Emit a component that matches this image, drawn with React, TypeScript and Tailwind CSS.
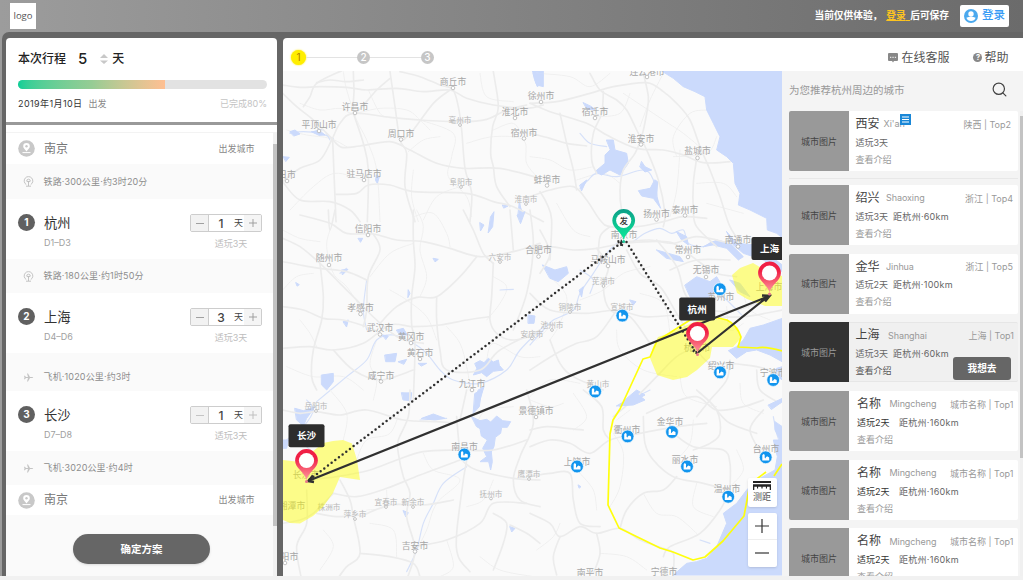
import React from "react";
import { Search } from "lucide-react";

type Tile = { x: number; y: number; roads: string[]; minor: string[]; rivers: string[]; water: string[] };

/* Geometry is kept per map tile, three units to a pixel. */
const tiles: Tile[] = [
  {
    x: 280, y: 30,
    roads: [
      "8,165 60,172 120,170 200,172 260,180 350,175 430,185 510,180 560,205 640,225 740,235 790,225",
      "185,122 110,160 90,200 70,230",
      "8,190 50,230 100,270 155,325",
      "8,455 60,415 120,390 155,330 180,280 220,250 330,262 420,270 540,275 620,268 680,240 740,225",
      "155,325 185,352 240,348 330,335 390,360 470,400 550,415 660,415 780,445",
      "220,250 250,340 265,420 262,575",
      "158,330 162,430 168,575",
      "168,493 230,490 265,465 330,465 400,485 560,490 640,515 700,530 790,575",
      "8,455 60,510 150,515 210,540 240,575",
      "330,125 345,230 360,330 380,370 375,470 405,575",
      "510,180 460,220 400,300 370,330",
      "360,125 420,140 480,165 518,178 535,230 545,300 555,415 575,490 570,575",
      "640,125 655,230 638,290 632,370 640,410 650,470 690,530",
      "220,125 222,180 225,248 290,180 330,145",
      "110,158 150,150 200,155 250,150",
    ],
    minor: [
      "190,125 200,180 230,270 260,330 290,420 300,575",
      "20,300 80,315 150,325 200,350",
      "420,270 520,310 515,380 505,440 560,500 575,560",
      "60,220 120,240 180,235 220,250 300,235 380,240 420,270 450,300",
      "400,420 395,500 415,575", "560,340 640,320 730,330 740,400 780,450",
      "640,300 700,280 730,325", "265,180 300,250 330,262", "385,365 430,330 480,320",
      "30,540 100,470 165,430 250,450", "600,130 620,200 700,215", "430,570 470,500 540,470",
    ],
    rivers: ["30,310 70,305 120,310 160,325", "720,520 722,575", "100,305 130,300 150,330"],
    water: ["757,122 770,165 790,170 790,122", "30,305 45,300 60,312 42,318", "95,305 120,303 135,315 118,316", "10,380 28,382 18,394", "290,435 298,440 292,460 287,452", "668,525 684,528 672,534", "718,520 726,545 724,568 714,560"],
  },
  {
    x: 530, y: 70,
    roads: [
      "0,100 80,95 180,70 250,50 350,38 400,65 440,100 480,150 510,230 540,300 570,380 600,470 640,530",
      "0,100 60,125 170,160 230,195 320,235 400,240 460,255 520,278 600,275",
      "180,10 210,60 260,90 290,120 320,180 350,240 385,330 405,430 400,470",
      "220,65 215,130 190,190 185,270 200,310",
      "340,10 355,80 350,130 335,200 315,250 280,300 270,360 275,420 290,460",
      "0,380 60,360 130,350 170,390 210,450 240,470 320,470 400,455 460,440 530,445",
      "0,190 60,205 110,220 170,228",
      "500,265 490,340 490,420 500,470 560,530",
      "90,130 110,220 130,300 140,360", "30,365 50,400 65,450 60,570",
      "240,470 210,500 205,570", "290,515 360,510 430,520 500,500 600,520",
    ],
    minor: [
      "280,70 400,150 460,190 520,240", "400,10 360,90 330,170", "540,120 480,130 430,200 440,260",
      "20,10 120,20 180,50 240,10", "430,260 530,250 560,200", "450,240 440,360 420,440",
      "500,340 580,340 620,380", "530,400 640,430", "0,260 60,270 120,300 190,290",
      "140,330 220,310 270,340", "80,400 130,480 180,500", "300,70 270,130 200,140",
    ],
    rivers: ["150,355 175,330 200,310 260,320 340,300 370,330 385,400", "310,515 345,490 390,475 425,490 460,480 475,520 520,530 550,515 600,520", "150,190 180,220 230,230"],
    water: [
      "390,0 430,25 460,50 495,65 525,80 530,120 550,160 570,200 560,240 590,260 610,280 615,340 630,370 625,405 660,420 710,445 712,480 740,490 765,510 765,0",
      "230,210 250,210 255,240 290,250 295,280 270,315 240,300 215,315 195,305 225,280 225,255 240,240",
      "375,330 383,335 380,380 392,415 370,385 335,378 325,362 360,355",
      "335,275 345,290 365,300 345,306 330,292", "10,10 40,10 35,40 22,50 14,30", "160,98 185,110 195,120 172,118",
      "440,485 470,500 475,525 455,510", "520,530 560,510 600,520 640,560 625,570 590,535 550,525", "150,345 170,330 155,362",
    ],
  },
  {
    x: 280, y: 210,
    roads: [
      "8,85 60,110 120,160 170,210 220,260 290,330 360,385 430,400",
      "8,155 60,165 120,175 200,185 260,210",
      "60,15 150,40 200,70 280,72 350,90 430,95 510,115 600,140 700,125 780,100",
      "8,290 70,300 130,325 190,330 260,350",
      "8,415 90,410 160,420 250,400 330,345 400,350 480,345 560,330 630,320",
      "120,160 130,260 125,330 100,420 95,500 110,540",
      "400,0 400,90 405,170 395,260 395,345 405,400 400,570",
      "590,140 540,200 470,260 410,262 350,290 300,340",
      "470,260 470,330 480,420 500,480 600,480 660,420 780,360",
      "280,72 300,120 265,200 260,300 250,350",
      "145,0 150,60 165,0", "640,160 635,260 630,330 650,370 700,390 780,370",
      "550,0 580,60 610,130 640,160", "690,0 700,120", "160,420 220,480 300,510 400,480", "750,0 760,110 740,250 700,360",
    ],
    minor: [
      "410,0 430,50 420,120 440,200 420,260", "150,60 140,110 160,190 200,230 240,290",
      "400,20 460,10 500,70 510,110", "330,240 380,270 440,320 470,390", "640,200 680,230 660,280 620,330",
      "8,240 50,200 100,190", "60,330 90,370 110,410", "290,390 270,460 290,510 280,570", "500,350 540,400 560,470 570,530",
      "20,470 100,500 190,500 250,540", "270,200 330,130 400,100", "620,450 640,400 720,440 780,440", "8,60 60,85 120,95",
    ],
    rivers: [
      "110,575 200,500 260,450 290,390 340,375 400,400 440,430 480,480 520,510 600,520 680,480 720,420 790,350",
      "180,190 200,175", "660,240 700,238", "260,210 250,300 260,360",
    ],
    water: [
      "125,495 160,490 160,515 140,540 125,525", "315,435 350,430 345,455 318,455", "585,460 600,452 612,458 625,445 640,456 655,450 658,466 670,480 640,484 620,500 605,488 580,495 590,476",
      "600,38 612,45 602,62", "632,20 642,5 638,50 625,68", "712,15 735,5 722,40", "745,315 765,318 762,340 745,340",
      "415,460 440,460 425,468", "595,540 612,530 600,570 588,570", "185,180 204,178 188,194", "460,145 475,148 466,155",
      "385,240 390,250 384,262", "190,335 205,330 200,350", "308,375 325,378 318,388", "375,550 395,548 390,565", "235,85 248,85 242,96",
      "350,360 370,355 382,375 360,375", "355,455 380,448 372,462", "48,218 58,224 52,228",
    ],
  },
  {
    x: 530, y: 230,
    roads: [
      "0,60 60,50 130,60 200,55 280,40 360,35 430,40 500,90 560,130 620,140",
      "290,60 330,130 390,170 440,250 500,350",
      "200,55 235,110 220,170 240,240 300,260 360,340",
      "0,190 60,240 170,250 260,240 340,260 440,255",
      "380,30 440,110 470,200 540,240 620,240 700,210",
      "0,420 80,370 140,340 200,320 260,240",
      "60,330 90,400 130,440 220,480", "500,350 440,380 380,440 320,500 250,560",
      "500,360 540,400 600,400 680,410 750,430", "600,390 590,450 540,510 500,560",
      "520,260 640,260 757,240", "420,120 500,90 600,90", "30,0 60,70 30,130", "680,420 690,480 750,520",
    ],
    minor: [
      "150,210 220,180 280,130 360,110", "60,140 110,200 90,280 60,330", "330,190 400,220 420,310",
      "0,500 60,450 150,460", "260,300 270,360 340,420 440,440", "450,440 470,500 560,530", "590,230 600,300 640,280",
      "20,330 60,290 80,270", "630,460 640,520 700,550", "420,270 480,320", "640,190 660,240 720,270",
    ],
    rivers: ["0,345 40,300 70,270 130,240 150,190 190,130 230,70 260,40", "540,170 590,210 640,260", "150,120 190,150 180,190", "360,480 320,500 270,525"],
    water: [
      "757,265 700,285 660,295 640,330 620,350 595,362 620,385 650,365 680,360 720,375 765,400 765,262",
      "465,165 500,140 540,155 560,140 575,165 545,195 500,225 480,200", "38,105 75,120 110,110 115,130 85,155 60,145",
      "590,5 620,40 680,45 757,105 757,125 700,90 640,70 610,45", "380,60 450,80 460,95 410,85", "148,180 160,170 155,200",
      "300,210 318,215 310,225", "290,505 320,480 345,495 310,515 270,530", "740,415 757,410 757,450 742,440", "600,150 630,160 660,200 630,185",
    ],
  },
  {
    x: 280, y: 390,
    roads: [
      "8,60 60,70 110,65 180,75 260,60 370,90 470,95 530,100",
      "390,0 385,80 355,150 355,190 370,260 390,310 380,380 405,480 380,570",
      "80,270 170,260 270,240 350,210 430,185 530,180 640,180 740,150",
      "160,310 230,320 320,295 420,255 540,210",
      "530,80 540,180 560,200 550,270 530,430 535,500 570,545",
      "550,215 590,240 700,265 780,270",
      "80,300 80,400 50,470 65,570", "180,270 210,330 220,380 240,490 200,530 170,570",
      "240,490 330,500 400,520 420,560", "240,380 330,345 430,345 520,330",
      "400,470 500,450 600,400 640,340 740,340", "640,370 680,400 670,460 640,540", "740,0 760,100 720,200 700,270 720,330 780,350",
      "110,370 170,380 240,375", "690,405 740,430 780,460", "8,400 60,390 100,370 160,310", "560,0 540,90",
    ],
    minor: [
      "150,0 200,70 190,150", "230,210 260,150 330,130 360,60", "430,190 460,240 540,270 470,340 440,420 410,480",
      "270,400 340,420 350,500", "590,100 620,60 700,50", "640,270 610,330 560,350", "130,420 160,470 120,540",
      "500,450 520,530 480,560", "600,500 660,540 760,560", "320,300 315,350 260,360",
    ],
    rivers: ["560,230 490,280 460,340 430,400 410,480 380,545", "80,30 100,60 70,110 20,150", "420,90 500,85", "60,150 90,180"],
    water: [
      "575,80 600,92 620,88 632,96 650,78 668,92 692,95 682,112 665,112 662,130 646,142 642,170 634,186 637,215 632,240 626,215 600,215 620,200 608,175 622,150 604,138 600,116 590,110", "585,10 605,0 598,50 580,70",
      "45,55 70,62 105,50 80,85 70,108 50,90", "425,85 460,72 495,85 465,90", "8,150 25,150 20,175 8,175", "690,410 705,415 696,425",
      "370,362 385,368 378,380", "365,8 395,10 392,32 370,30",
    ],
  },
  {
    x: 530, y: 390,
    roads: [
      "0,170 60,150 120,160 180,190 240,150 330,130 440,110 530,100",
      "160,0 215,50 220,120 240,150", "0,260 60,250 120,250 130,330 150,400 210,410",
      "340,80 345,160 370,210 430,260 520,280 600,300", "430,130 490,170 580,180 600,220 600,290",
      "600,300 570,360 510,430 420,470 400,500", "270,415 290,360 340,310 400,300 440,260",
      "0,370 60,400 90,440 150,410 200,430 270,415 330,450 400,475 430,490 430,550",
      "200,430 210,490 190,550", "90,440 70,500 80,555", "500,0 560,60 570,130 540,160 490,180",
      "350,70 420,40 500,20 560,60 640,50 700,30", "700,60 660,120 700,200", "560,60 600,100 680,130", "0,120 50,110 110,115 160,120",
    ],
    minor: [
      "250,130 280,190 270,290 240,350", "340,310 380,370 440,380 500,430", "20,480 70,440 90,400", "130,10 170,80 130,120",
      "440,210 480,160 490,90", "150,250 190,300 200,360", "500,280 490,350 550,380", "210,490 290,500 350,540",
      "300,60 260,90", "620,180 640,240 600,290", "0,30 60,50 100,40",
    ],
    rivers: ["730,80 740,130 750,160", "510,450 540,460"],
    water: [
      "735,95 757,110 765,555 430,555 470,520 500,515 530,505 560,470 590,400 580,370 620,340 650,300 680,270 735,240 742,200 730,150 750,150 735,120",
      "290,30 320,10 345,30 310,45 260,48", "715,45 757,25 757,35 725,58", "145,285 153,290 148,294",
    ],
  },
];

/** Catmull-Rom curve through a list of "x,y" points. */
function curve(points: string): string {
  const p = points.split(" ").map((s) => s.split(",").map(Number));
  let d = `M${p[0][0]} ${p[0][1]}`;
  for (let i = 0; i < p.length - 1; i++) {
    const a = p[i - 1] ?? p[i], b = p[i], c = p[i + 1], e = p[i + 2] ?? c;
    d += `C${b[0] + (c[0] - a[0]) / 6} ${b[1] + (c[1] - a[1]) / 6} ${c[0] - (e[0] - b[0]) / 6} ${c[1] - (e[1] - b[1]) / 6} ${c[0]} ${c[1]}`;
  }
  return d;
}

/* name, text centre x, text centre y, dot offset (0 = none), faint */
const places: [string, number, number, number, boolean][] = [
  ["商丘市", 453, 82, 6, false], ["许昌市", 355, 107, 6, false], ["平顶山市", 319, 125, 6, false], ["亳州市", 460, 120, 5, true],
  ["周口市", 401, 133.5, 6, false], ["徐州市", 541, 96, 6, false], ["淮北市", 515, 112, 6, false], ["宿州市", 524, 132.5, 6, false],
  ["驻马店市", 364, 174, 6, false], ["阜阳市", 461, 182, 5, true], ["淮南市", 526, 199, 5, true], ["日市", 287, 175, 6, false],
  ["连云港市", 647, 72, 5, false], ["宿迁市", 595, 112, 6, false], ["淮安市", 641, 138.5, 6, false], ["盐城市", 697.5, 151, 7, false],
  ["蚌埠市", 547, 179.5, 6, false], ["扬州市", 656.5, 213.5, 6, false], ["泰州市", 685, 209.5, 6, false], ["南京市", 624, 234.5, 0, false],
  ["南通市", 738, 239.5, 7, false], ["常州市", 688, 250, 7, false], ["合肥市", 538.5, 249.5, 7, false], ["六安市", 500, 257, 5, true],
  ["信阳市", 368, 229, 6, false], ["随州市", 329, 258, 7, false], ["孝感市", 360.5, 308, 6, false], ["武汉市", 380, 327.5, 7, false],
  ["黄冈市", 411, 337, 6, false], ["黄石市", 420, 353, 6, false], ["咸宁市", 381, 375.5, 6, false], ["安庆市", 532, 333.5, 5, true],
  ["九江市", 472, 384, 6, false], ["马鞍山市", 608, 260, 6, false], ["芜湖市", 603.5, 281, 5, true], ["铜陵市", 570, 307, 5, true],
  ["宣城市", 622, 307, 0, true], ["池州市", 552, 325, 5, true], ["无锡市", 706, 270, 7, false], ["苏州市", 721, 297, 0, false],
  ["上海市", 769, 287, 0, false], ["杭州市", 697, 348, 0, false], ["绍兴市", 721, 366, 0, false], ["宁波市", 773, 373, 0, false],
  ["黄山市", 598, 384, 0, true], ["景德镇市", 536, 411, 6, false], ["岳阳市", 316, 406, 5, true], ["南昌市", 464.5, 447, 0, false],
  ["鹰潭市", 529, 474, 5, true], ["抚州市", 491, 493.5, 5, true], ["长沙市", 306, 475, 0, false], ["湘潭市", 292, 506, 0, false],
  ["株洲市", 329, 506.5, 0, true], ["萍乡市", 355, 514, 5, true], ["宜春市", 386, 502, 5, true], ["新余市", 413, 502, 5, true],
  ["吉安市", 415, 545.5, 6, false], ["衡阳市", 285, 557, 6, false], ["上饶市", 577, 462, 0, false], ["衢州市", 627, 429.5, 0, false],
  ["金华市", 670, 422, 0, false], ["丽水市", 685, 460, 0, false], ["台州市", 766, 448.5, 0, false], ["温州市", 727, 489, 0, false],
  ["南平市", 590, 572.5, 0, false], ["宁德市", 664, 572, 0, false],
];

const attractions: [number, number][] = [
  [622.3, 315.6], [719.8, 289.2], [720, 372.4], [773.2, 380], [595.2, 391.5], [627.6, 436.4], [672, 432],
  [577, 466.5], [687, 466.5], [765.7, 457.3], [728.2, 496.8], [464.3, 454.5],
];

function Pin({ x, y, tone, children }: { x: number; y: number; tone: "red" | "green"; children?: React.ReactNode }) {
  return (
    <g transform={`translate(${x} ${y})`}>
      <path d="M0 19.5C-2 11-11.4 8-11.4 0a11.4 11.4 0 1 1 22.8 0C11.4 8 2 11 0 19.5Z" fill={tone === "red" ? "url(#pinRed)" : "url(#pinGreen)"} />
      <circle r="7.6" fill="#fff" />
      <circle cy="21" r="1.5" fill={tone === "red" ? "#e7798b" : "#1fc79b"} />
      {children}
    </g>
  );
}

function Tag({ x, y, text }: { x: number; y: number; text: string }) {
  return (
    <g>
      <rect x={x - 18} y={y - 11.5} width="36" height="23" rx="2" fill="#2d2d2d" />
      <text x={x} y={y + 3.7} textAnchor="middle" fontSize="9.6" fontWeight="700" fill="#fff">{text}</text>
    </g>
  );
}

function TripMap() {
  return (
    <div className="relative h-[505px] w-[499px] shrink-0 overflow-hidden bg-[#fafafa]">
      <svg viewBox="283 71 499 505" className="block h-full w-full">
        <defs>
          <linearGradient id="pinRed" x1="0" y1="0" x2="0" y2="1">
            <stop offset="0.3" stopColor="#f01f45" /><stop offset="1" stopColor="#ff9aa0" />
          </linearGradient>
          <linearGradient id="pinGreen" x1="0" y1="0" x2="0" y2="1">
            <stop offset="0" stopColor="#0d9f88" /><stop offset="1" stopColor="#0ceb9a" />
          </linearGradient>
        </defs>
        {tiles.map((t, i) => (
          <g key={i} transform={`translate(${t.x} ${t.y}) scale(.33333)`} fill="none" strokeLinecap="round">
            {t.minor.map((r) => <path key={r} d={curve(r)} stroke="#f0f0f0" strokeWidth="3" />)}
            {t.rivers.map((r) => <path key={r} d={curve(r)} stroke="#d6e1f9" strokeWidth="3.5" />)}
            {t.water.map((w) => <polygon key={w} points={w} fill="#cbdafc" stroke="#cbdafc" strokeWidth="3" strokeLinejoin="round" />)}
            {t.roads.map((r) => <path key={r} d={curve(r)} stroke="#ececec" strokeWidth="5" />)}
          </g>
        ))}
        <g textAnchor="middle">
          {places.map(([name, x, y, dot, faint]) => (
            <g key={name}>
              <text x={x} y={y + 3.3} fontSize={faint ? 7.6 : 8.8} fill={faint ? "#b8b8b8" : "#a6a6a6"}>{name}</text>
              {dot > 0 && <circle cx={x} cy={y + dot} r={faint ? 1.4 : 1.8} fill="#fff" stroke="#b5b5b5" strokeWidth=".8" />}
            </g>
          ))}
        </g>
        <g fill="#ffff00" fillOpacity=".45">
          <polygon points="283,460 300,462 317,448 323,443 333,441 343,440 352,443.5 357,460 360,480 340,477 333,493 323,507 313,516 300,523.5 290,523 283,520" />
          <polygon points="650,358 653,347 658,337 670,333 687,325 700,320 710,318 727,320 738,328 741,338 733,347 712,347 710,358 697,370 687,377 673,380 657,375" />
          <polygon points="732,275 740,268 753,263 765,270 782,276 782,306 765,306 747,299 737,293" />
        </g>
        <path d="M782 351Q765 346 757 348L738 347L741 337Q737 325 727 320Q707 314 690 320L657 341L650 357L643 359L620 409L613 420L610 434L608 505L619 528L660 548L673 552L693 560L705 557L723 541L744 516L750 484L766 472M774 476L782 464" fill="none" stroke="#ffff00" strokeOpacity=".95" strokeWidth="1.7" strokeLinejoin="round" />
        <g stroke="#303030" fill="none" strokeWidth="2.2">
          <path d="M308 481L768 296.5L698 352.5" />
          <path d="M762 295.5L769.5 296L765 301.5M313 475.5L308.5 481L314 482" strokeWidth="2.6" />
          <g strokeWidth="2.5" strokeLinecap="round" strokeDasharray="0 4.6">
            <path d="M621 243L309 480" />
            <path d="M626.5 242L695 351" />
          </g>
          <path d="M617.5 242L622 241M621.5 246L622 241M693 350L696.5 352.5L698 349" strokeWidth="3" strokeDasharray="2 1.5" />
        </g>
        {attractions.map(([x, y]) => (
          <g key={`${x}-${y}`} transform={`translate(${x} ${y})`}>
            <circle r="6.4" fill="#1295ee" stroke="#fff" strokeWidth=".7" />
            <path d="M-3.4 3.1V-2.1L-2.3-3.4L-1-2.6V.5L0 1.2V.3L1.4-1L3.5.1V3.1Z" fill="#fff" />
          </g>
        ))}
        <Pin x={306.5} y={460.5} tone="red" />
        <Pin x={697.5} y={333.5} tone="red" />
        <Pin x={769.5} y={273} tone="red" />
        <Pin x={623.7} y={220.5} tone="green">
          <text y="3.2" textAnchor="middle" fontSize="8.5" fontWeight="500" fill="#333">发</text>
        </Pin>
        <Tag x={306.5} y={435.7} text="长沙" />
        <Tag x={697.2} y={309} text="杭州" />
        <Tag x={769.5} y={248.5} text="上海" />
      </svg>
      <div className="absolute right-[5.5px] bottom-[9.5px] flex w-[29px] flex-col gap-[6px]">
        <button className="flex h-[29px] flex-col items-center justify-center rounded-[2px] bg-white shadow">
          <svg width="18" height="9" viewBox="0 0 18 9" className="mb-px shrink-0">
            <path d="M0 0H18V2H0ZM0 3.2H18V9H16.7V5.8H14V7.5H12.9V5.8H9.6V7.5H8.4V5.8H5.1V7.5H4V5.8H1.3V9H0Z" fill="#222" />
          </svg>
          <span className="text-[9px] leading-[12px] text-[#555]">测距</span>
        </button>
        <div className="flex h-[54px] flex-col rounded-[2px] bg-white shadow">
          {["M7 0V14M0 7H14", "M0 7H14"].map((d, i) => (
            <button key={d} className={i === 0 ? "flex flex-1 items-center justify-center border-b border-[#eee]" : "flex flex-1 items-center justify-center"}>
              <svg width="14" height="14" viewBox="0 0 14 14"><path d={d} stroke="#333" strokeWidth="1.2" /></svg>
            </button>
          ))}
        </div>
      </div>
    </div>
  );
}

function HomeRow() {
  return (
    <div className="flex items-center bg-white pr-[18.5px] pl-3">
      <svg width="17" height="17" viewBox="0 0 17 17">
        <circle cx="8.5" cy="8.5" r="8.3" fill="#c8c8c8" />
        <path d="M8.5 11.500C6.5 9 5.2 8 5.2 6.3a3.3 3.3 0 1 1 6.6 0C11.8 8 10.5 9 8.5 11.5Z" fill="#fff" />
        <circle cx="8.5" cy="6.3" r="1.2" fill="#c8c8c8" />
        <path d="M4.5 12.6H12.5" stroke="#fff" />
      </svg>
      <span className="ml-[9px] text-[12px] text-[#777]">南京</span>
      <span className="ml-auto text-[9px] text-[#888]">出发城市</span>
    </div>
  );
}

function LegRow({ icon, text, low }: { icon: "train" | "plane"; text: string; low?: boolean }) {
  return (
    <div className={low ? "flex items-center bg-[#fafafa] pt-[10px] pl-[17px]" : "flex items-center bg-[#fafafa] pl-[17px]"}>
      {icon === "train" ? (
        <svg width="11" height="11" viewBox="0 0 11 11" fill="none" stroke="#bdbdbd" strokeWidth=".9">
          <path d="M3.3 8.6A4.3 4.3 0 1 1 7.7 8.6M3 10.2H8M5.5 10V5M3.7 5.2Q3.7 3.2 5.5 3.2T7.3 5.2L5.5 6Z" />
        </svg>
      ) : (
        <svg width="11" height="11" viewBox="0 0 11 11" fill="#c4c4c4">
          <path d="M1 3.7H1.8L3 5H5L4 1.5H5L7 5H9.3Q10.2 5.1 10.2 5.5T9.3 6H7L5 9.5H4L5 6H3L1.8 7.3H1L1.5 5.5Z" />
        </svg>
      )}
      <span className="ml-[9.5px] text-[9px] tracking-[0.017em] text-[#8d8d8d]">{text}</span>
    </div>
  );
}

function StopRow({ n, city, span, days, dim }: { n: number; city: string; span: string; days: number; dim?: boolean }) {
  return (
    <div className="flex items-start bg-white pt-[13px] pr-[11px] pl-3">
      <span className="mt-[2px] flex h-[17px] w-[17px] items-center justify-center rounded-full bg-[#606060] text-[10px] font-bold text-white">{n}</span>
      <div className="ml-[9px] flex flex-col">
        <span className="text-[13.3px] leading-[22px] text-[#333]">{city}</span>
        <span className="mt-[2px] text-[9px] leading-[13px] text-[#a0a0a0]">{span}</span>
      </div>
      <div className="mt-[2px] ml-auto flex w-[72px] flex-col">
        <div className="flex h-[18px] overflow-hidden rounded-[2px] border border-[#cdcdcd] text-[#444]">
          <span className="flex w-[18px] items-center justify-center border-r border-[#cdcdcd] bg-[#f2f2f2]">
            <i className={dim ? "h-px w-2 bg-[#c4c4c4]" : "h-px w-2 bg-[#a0a0a0]"} />
          </span>
          <span className="flex w-[24px] items-center justify-center pt-px text-[12px] font-medium">{days}</span>
          <span className="flex flex-1 items-center justify-center text-[9px]">天</span>
          <span className="flex w-[17px] items-center justify-center bg-[#f5f5f5]">
            <svg width="8" height="8" viewBox="0 0 8 8"><path d="M4 0V8M0 4H8" stroke={dim ? "#bbb" : "#999"} strokeWidth=".9" /></svg>
          </span>
        </div>
        <span className="mt-[5px] pl-[10px] text-center text-[9px] leading-[13px] text-[#bdbdbd]">适玩3天</span>
      </div>
    </div>
  );
}

function Itinerary() {
  return (
    <aside className="flex h-[538px] w-[271px] shrink-0 flex-col overflow-hidden rounded-t-[4px] bg-white">
      <div className="h-[84px] px-3 pt-3 pr-[10px]">
        <div className="flex h-[18px] items-center text-[12px] font-medium text-[#222]">
          本次行程
          <span className="ml-3 text-[15px]">5</span>
          <svg width="8" height="10" viewBox="0 0 8 10" className="ml-[13px] mr-1"><path d="M4 0L8 4H0ZM4 10L8 6.5H0Z" fill="#c8c8c8" /></svg>
          天
        </div>
        <div className="mt-[12px] h-[9px] overflow-hidden rounded-full bg-[#e2e2e2]">
          <div className="h-full w-[147px] bg-linear-to-r from-[#06cf97] via-[#95cc94] to-[#ffbf92]" />
        </div>
        <div className="mt-[8px] flex h-[14px] items-center text-[9px]">
          <span className="tracking-[0.045em] text-[#333]">2019年1月10日</span>
          <span className="ml-[6px] text-[#888]">出发</span>
          <span className="ml-auto text-[#c4c4c4]">已完成80%</span>
        </div>
      </div>
      <div className="h-[3px] bg-[#999]" />
      <div className="flex flex-1 pt-[7px]">
        <div className="flex flex-1 flex-col bg-[#fafafa]">
          <div className="grid grid-rows-[31px_35px_60px_34px_60px_38px_60px_34px_30px] border-t border-[#f3f3f3]">
            <HomeRow />
            <LegRow icon="train" text="铁路·300公里·约3时20分" />
            <StopRow n={1} city="杭州" span="D1–D3" days={1} />
            <LegRow icon="train" text="铁路·180公里·约1时50分" />
            <StopRow n={2} city="上海" span="D4–D6" days={3} />
            <LegRow icon="plane" text="飞机·1020公里·约3时" low />
            <StopRow n={3} city="长沙" span="D7–D8" days={1} dim />
            <LegRow icon="plane" text="飞机·3020公里·约4时" />
            <HomeRow />
          </div>
          <button className="mt-[19px] ml-[67px] h-[30px] w-[137px] rounded-full bg-[#666] pt-px text-[10.5px] font-bold text-white shadow-sm">确定方案</button>
        </div>
        <div className="w-[4px] bg-[#f1f1f1] pt-3"><div className="h-[382px] bg-[#c3c3c3]" /></div>
      </div>
    </aside>
  );
}

type City = { name: string; pinyin: string; place: string; days: number; far?: string; kind?: "note" | "active" | "plain" };

const cities: City[] = [
  { name: "西安", pinyin: "Xi'an", place: "陕西 | Top2", days: 3, kind: "note" },
  { name: "绍兴", pinyin: "Shaoxing", place: "浙江 | Top4", days: 3, far: "距杭州·60km" },
  { name: "金华", pinyin: "Jinhua", place: "浙江 | Top5", days: 2, far: "距杭州·100km" },
  { name: "上海", pinyin: "Shanghai", place: "上海 | Top1", days: 3, far: "距杭州·60km", kind: "active" },
  { name: "名称", pinyin: "Mingcheng", place: "城市名称 | Top1", days: 2, far: "距杭州·160km", kind: "plain" },
  { name: "名称", pinyin: "Mingcheng", place: "城市名称 | Top1", days: 2, far: "距杭州·160km", kind: "plain" },
  { name: "名称", pinyin: "Mingcheng", place: "城市名称 | Top1", days: 2, far: "距杭州·160km", kind: "plain" },
];

function CityCard({ c }: { c: City }) {
  const active = c.kind === "active";
  const plain = c.kind === "plain";
  return (
    <div className={active ? "relative flex h-[60px] shrink-0 rounded-[2px] border-y border-[#e6e6e6] bg-[#f0f0f0]" : "relative flex h-[60px] shrink-0 rounded-[2px] bg-white"}>
      <div className={active ? "-my-px flex w-[60px] items-center justify-center rounded-l-[2px] bg-[#333] pt-px text-[9px] text-[#999]" : "flex w-[60px] items-center justify-center rounded-l-[2px] bg-[#999] pt-px text-[9px] text-[#444]"}>城市图片</div>
      <div className={plain ? "flex flex-1 flex-col pt-[3px] pr-[4.5px] pl-[8px]" : c.kind === "note" ? "flex flex-1 flex-col pt-[3px] pr-[7px] pl-[6.5px]" : active ? "flex flex-1 flex-col pt-[2px] pr-[4px] pl-[6.5px]" : "flex flex-1 flex-col pt-[3px] pr-[5px] pl-[6.5px]"}>
        <div className="flex h-5 items-center text-[9px] text-[#999]">
          <span className="text-[12px] text-[#444]">{c.name}</span>
          <span className={plain || active ? "ml-[8.5px] tracking-[-0.01em]" : c.kind === "note" ? "ml-[4px]" : "ml-[6.500px] tracking-[-0.01em]"}>{c.pinyin}</span>
          <span className="mt-px ml-auto">{c.place}</span>
        </div>
        <div className="flex h-[17px] items-center text-[9px] text-[#666]">
          <span className={plain ? "text-[#333]" : ""}>适玩{c.days}天</span>
          <span className={plain ? "ml-[9.5px] tracking-[0.03em]" : "ml-[5px] tracking-[0.03em]"}>{c.far}</span>
        </div>
        <div className={active ? "flex h-[17px] items-center text-[9px] text-[#555]" : "flex h-[17px] items-center text-[9px] text-[#999]"}>查看介绍</div>
      </div>
      {c.kind === "note" && (
        <svg width="11" height="11" viewBox="0 0 11 11" className="absolute top-[2.5px] left-[111px]">
          <rect width="11" height="11" fill="#1a87d7" /><path d="M2 3H9M2 5.5H9M2 8H9" stroke="#fff" />
        </svg>
      )}
      {active && <button className="absolute top-[33.5px] left-[164px] h-[23px] w-[58px] rounded-[3px] bg-[#666] pt-px text-[9.7px] font-bold text-white">我想去</button>}
    </div>
  );
}

function Steps() {
  return (
    <div className="flex items-center">
      <span className="flex h-[15px] w-[15px] items-center justify-center rounded-full bg-[#ffee00] text-[10px] text-[#b07c00] shadow-[0_0_2px_#ffe600]">1</span>
      <i className="h-px w-[51px] bg-[#e3e3e3]" />
      <span className="flex h-[13px] w-[13px] items-center justify-center rounded-full bg-[#c6c6c6] text-[10px] font-medium text-white">2</span>
      <i className="h-px w-[51px] bg-[#e3e3e3]" />
      <span className="flex h-[13px] w-[13px] items-center justify-center rounded-full bg-[#c6c6c6] text-[10px] font-medium text-white">3</span>
    </div>
  );
}

export default function App() {
  return (
    <div className="flex h-[580px] w-[1023px] flex-col overflow-hidden bg-[#f1f1f1] font-['Inter','Noto_Sans_CJK_SC',sans-serif] whitespace-nowrap">
      <div className="flex h-[576px] flex-col bg-linear-to-r from-[#9c9c9c] to-[#6b6b6b]">
        <header className="flex h-8 shrink-0 items-center pr-[14px] pl-[10px]">
          <div className="flex h-[26px] w-[26px] items-center justify-center bg-white font-['Open_Sans'] text-[9.5px] text-[#555]">logo</div>
          <p className="ml-auto text-[9.7px] font-bold text-white">当前仅供体验，</p>
          <p className="ml-[4px] text-[9.7px] font-bold text-white"><a className="text-[#fdc41f] underline">登录<span className="text-white">&nbsp;&nbsp;</span></a>后可保存</p>
          <button className="ml-[11px] flex h-[22px] w-[49px] items-center justify-center gap-1 rounded-[2px] bg-white text-[11.5px] font-medium text-[#369af5]">
            <svg width="14" height="14" viewBox="0 0 14 14">
              <circle cx="7" cy="7" r="7" fill="#4ba9ee" /><circle cx="7" cy="5" r="2.7" fill="#fff" />
              <path d="M2.4 8.7Q7 7 11.6 8.7Q10.5 12 7 12T2.4 8.7Z" fill="#fff" />
            </svg>
            登录
          </button>
        </header>
        <div className="ml-[2px] flex min-h-0 flex-1 rounded-tl-[7px] bg-[#666] pt-[6px] pl-[4px]">
          <Itinerary />
          <main className="ml-[6px] flex h-[538px] w-[740px] flex-col overflow-hidden rounded-tl-[4px] bg-white">
            <div className="flex h-[33px] shrink-0 items-center pt-[6px] pr-[14.5px] pl-[8px]">
              <Steps />
              <div className="ml-auto flex items-center text-[12px] text-[#555]">
                <svg width="10" height="10" viewBox="0 0 10 10" className="mr-[3px]">
                  <path d="M1 0H9Q10 0 10 1V7Q10 8 9 8H6L5 9.6L4 8H1Q0 8 0 7V1Q0 0 1 0Z" fill="#888" />
                  <path d="M2 4.3H3.3M4.4 4.3H5.7M6.8 4.3H8.1" stroke="#fff" />
                </svg>
                在线客服
              </div>
              <div className="ml-[24px] flex items-center text-[12px] text-[#555]">
                <span className="mr-[2px] flex h-[9px] w-[9px] items-center justify-center rounded-full bg-[#888] text-[7.5px] font-bold text-white">?</span>
                帮助
              </div>
            </div>
            <div className="flex flex-1">
              <TripMap />
              <section className="flex h-[505px] flex-1 flex-col bg-[#f4f4f4]">
                <div className="flex h-[40px] shrink-0 items-center justify-between pr-[15px] pl-[7px] text-[10.5px] text-[#999]">
                  为您推荐杭州周边的城市
                  <Search size={17} strokeWidth={1.7} className="-mt-[3px] text-[#444]" />
                </div>
                <div className="flex min-h-0 flex-1 justify-between pl-[7px]">
                  <div className="flex w-[229px] flex-col gap-[8.7px] overflow-hidden">
                    <div className="-mb-[2.7px] border-b border-[#e8e8e8] pb-[7px]"><CityCard c={cities[0]} /></div>
                    {cities.slice(1).map((c, i) => <CityCard key={i} c={c} />)}
                  </div>
                  <div className="w-[3px] bg-[#f0f0f0] pt-[5px]"><div className="h-[342px] bg-[#c3c3c3]" /></div>
                </div>
              </section>
            </div>
          </main>
        </div>
      </div>
    </div>
  );
}
